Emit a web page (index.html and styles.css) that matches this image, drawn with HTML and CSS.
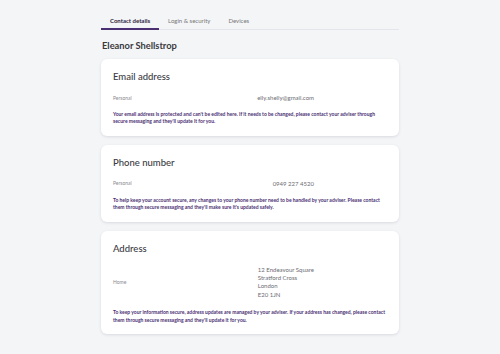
FILE: index.html
```html
<!DOCTYPE html>
<html lang="en">
<head>
  <meta charset="UTF-8" />
  <meta name="viewport" content="width=device-width, initial-scale=1" />
  <title>Contact details</title>
  <link rel="stylesheet" href="styles.css">
</head>
<body>

  <main class="page">
    <!-- Tabs -->
    <nav class="tabs">
      <a href="#" class="tab active">Contact details</a>
      <a href="#" class="tab">Login &amp; security</a>
      <a href="#" class="tab">Devices</a>
    </nav>

    <h1 class="name">Eleanor Shellstrop</h1>

    <!-- Email -->
    <section class="card">
      <h2>Email address</h2>
      <div class="row">
        <span class="label">Personal</span>
        <span class="value">elly.shelly@gmail.com</span>
      </div>
      <p class="note">Your email address is protected and can't be edited here. If it needs to be changed, please contact your adviser through secure messaging and they'll update it for you.</p>
    </section>

    <!-- Phone -->
    <section class="card">
      <h2>Phone number</h2>
      <div class="row">
        <span class="label">Personal</span>
        <span class="value">0949 227 4520</span>
      </div>
      <p class="note">To help keep your account secure, any changes to your phone number need to be handled by your adviser. Please contact them through secure messaging and they'll make sure it's updated safely.</p>
    </section>

    <!-- Address -->
    <section class="card">
      <h2>Address</h2>
      <div class="row">
        <span class="label">Home</span>
        <span class="value address">
          <span>12 Endeavour Square</span>
          <span>Stratford Cross</span>
          <span>London</span>
          <span>E20 1JN</span>
        </span>
      </div>
      <p class="note">To keep your information secure, address updates are managed by your adviser. If your address has changed, please contact them through secure messaging and they'll update it for you.</p>
    </section>
  </main>

</body>
</html>
```

FILE: styles.css
```css
body {
  margin: 0;
  font-family: 'Lato', 'Open Sans', sans-serif;
  background-color: #f4f5f7;
  color: #333;
}

.page {
  width: 298px;
  margin: 0 auto;
  padding: 15px 0 18px;
  display: flex;
  flex-direction: column;
}

/* Tabs */
.tabs {
  display: flex;
  border-bottom: 1px solid #e4e4ea;
}

.tab {
  font-size: 6px;
  color: #777;
  text-decoration: none;
  padding: 2px 9px 4px;
  border-bottom: 2px solid transparent;
  margin-bottom: -1px;
}

.tab.active {
  color: #2d2340;
  font-weight: 700;
  border-bottom-color: #4b2f73;
}

.name {
  font-size: 9.3px;
  font-weight: 700;
  color: #3a3a3f;
  margin: 10px 0 8px 1px;
}

/* Cards */
.card {
  background: #fff;
  border-radius: 6px;
  box-shadow: 0 1px 3px rgba(30, 30, 60, 0.12);
  padding: 11px 12px 10px;
  margin-bottom: 9px;
}

.card h2 {
  font-size: 9.5px;
  font-weight: 500;
  color: #3a3a3f;
  margin: 1px 0 12px;
}

.row {
  display: grid;
  grid-template-columns: 1fr auto;
  align-items: center;
  padding-right: 73px;
  margin-bottom: 10px;
}

.label {
  font-size: 5px;
  color: #8a8a90;
}

.value {
  font-size: 6px;
  color: #6c6c72;
}

.address {
  display: flex;
  flex-direction: column;
  line-height: 8.4px;
}

.note {
  margin: 0;
  font-size: 5px;
  line-height: 7.4px;
  font-weight: 700;
  color: #4b2f73;
}
```
